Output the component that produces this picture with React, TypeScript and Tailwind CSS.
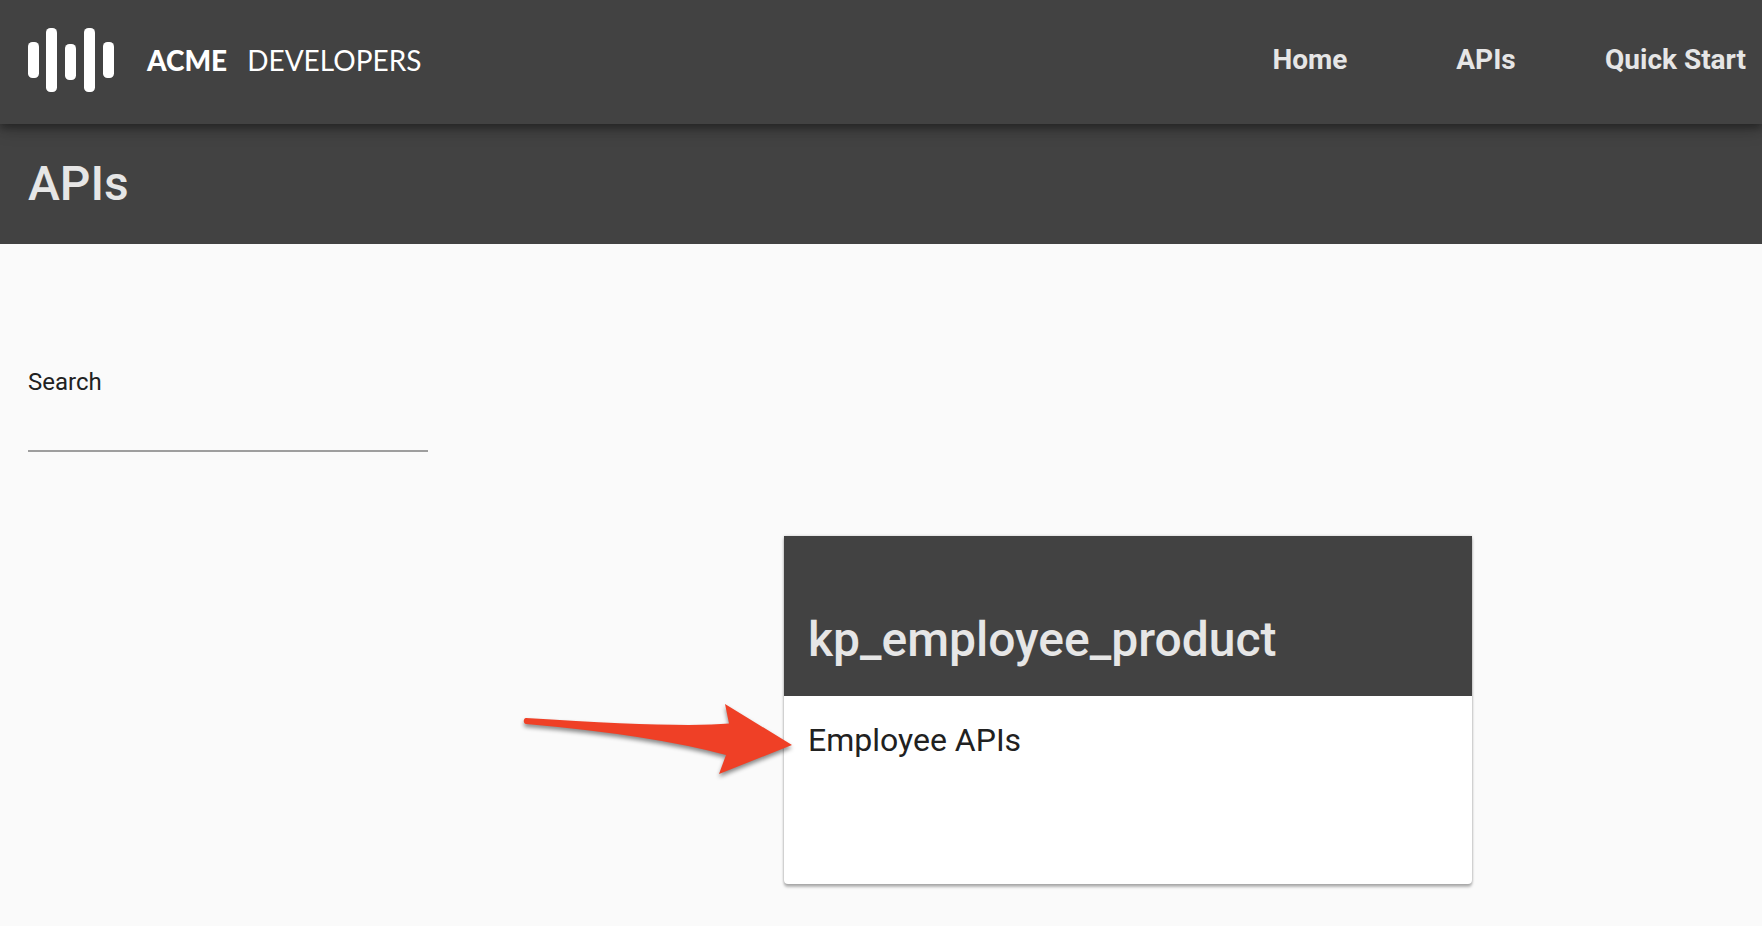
import React from "react";

const bars = [
  { x: 0, y: 14, h: 36 },
  { x: 18, y: 0, h: 64 },
  { x: 37, y: 16, h: 36 },
  { x: 56, y: 0, h: 64 },
  { x: 75, y: 14, h: 36 },
];

function Logo() {
  return (
    <a href="#home" className="flex items-center gap-[33px] text-white">
      <svg width="86" height="64" viewBox="0 0 86 64" fill="currentColor" aria-hidden="true">
        {bars.map((b) => (
          <rect key={b.x} x={b.x} y={b.y} width="11" height={b.h} rx="4.5" />
        ))}
      </svg>
      <span className="flex gap-5 font-[Lato,sans-serif] text-[28px] leading-8">
        <span className="font-black">ACME</span>
        <span>DEVELOPERS</span>
      </span>
    </a>
  );
}

function Arrow() {
  return (
    <svg
      className="pointer-events-none absolute top-1 -left-[264px]"
      width="280"
      height="84"
      viewBox="0 0 280 84"
      aria-hidden="true"
    >
      <path
        d="M6 18 C3 18 3 24 6 24 Q132 35 206 55 L199 74 L272 45 L205 4 L209 23.500 Q160 28 6 18 Z"
        fill="#ef4026"
        className="drop-shadow-[0_3px_2px_rgba(0,0,0,0.45)]"
      />
    </svg>
  );
}

export default function App() {
  return (
    <div className="min-h-screen bg-[#fafafa] font-[Roboto,sans-serif] text-[#212121]">
      <header className="relative flex h-[124px] items-center justify-between bg-[#424242] pb-1 pl-7 shadow-[0_4px_8px_rgba(0,0,0,0.35),0_4px_18px_rgba(0,0,0,0.2)]">
        <Logo />
        <nav className="flex text-[28px] leading-8 font-bold text-[#e6e6e6]">
          <a href="#home" className="min-w-44 text-center">Home</a>
          <a href="#apis" className="min-w-44 text-center">APIs</a>
          <a href="#quick-start" className="pr-4 pl-[31px]">Quick Start</a>
        </nav>
      </header>
      <div className="flex h-[120px] items-center bg-[#424242] px-7">
        <h1 className="text-5xl leading-[60px] font-medium text-[#e6e6e6]">APIs</h1>
      </div>
      <main className="flex gap-[66px] pl-7">
        <form className="w-[400px] shrink-0 pt-[122px]">
          <label htmlFor="search" className="block text-2xl leading-8">Search</label>
          <input
            id="search"
            type="text"
            className="mt-2 block h-[46px] w-full border-b-2 border-[#9e9e9e] bg-transparent text-2xl outline-none"
          />
        </form>
        <section className="flex flex-1 justify-center pt-[292px] pb-10">
          <article className="w-[688px] rounded-b-[4px] bg-white shadow-[0_3px_3px_rgba(0,0,0,0.28),0_0_3px_rgba(0,0,0,0.2)]">
            <div className="flex h-40 items-end bg-[#424242] px-6 pb-[26px]">
              <h2 className="text-5xl leading-[60px] font-medium text-[#e6e6e6]">kp_employee_product</h2>
            </div>
            <div className="relative min-h-[188px] px-6 pt-6">
              <Arrow />
              <a href="#employee-apis" className="text-[32px] leading-10">Employee APIs</a>
            </div>
          </article>
        </section>
      </main>
    </div>
  );
}
